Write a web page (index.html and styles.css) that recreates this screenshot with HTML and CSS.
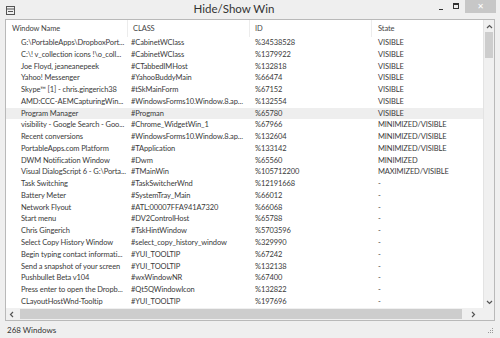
FILE: index.html
```html
<!DOCTYPE html>
<html lang="en">
<head>
    <meta charset="UTF-8">
    <title>Hide/Show Win</title>
    <link rel="stylesheet" href="styles.css">
</head>
<body>
<div class="window">
    <div class="titlebar">
        <svg class="app-icon" width="9" height="9" viewBox="0 0 9 9">
            <rect x="0.5" y="0.5" width="8" height="8" fill="none" stroke="#555"/>
            <line x1="0.5" y1="3" x2="8.5" y2="3" stroke="#555"/>
            <line x1="2" y1="5.5" x2="7" y2="5.5" stroke="#555"/>
        </svg>
        <div class="title">Hide/Show Win</div>
        <div class="caption-buttons">
            <div class="cap-btn"><span class="min-glyph"></span></div>
            <div class="cap-btn"><span class="max-glyph"></span></div>
            <div class="cap-btn close">&#x2715;</div>
        </div>
    </div>

    <div class="listbox">
        <div class="list-main">
            <div class="list-view">
                <div class="row header">
                    <div class="cell">Window Name</div>
                    <div class="cell">CLASS</div>
                    <div class="cell">ID</div>
                    <div class="cell">State</div>
                </div>
                <div class="row"><div class="cell">G:\PortableApps\DropboxPort...</div><div class="cell">#CabinetWClass</div><div class="cell">%34538528</div><div class="cell">VISIBLE</div></div>
                <div class="row"><div class="cell">C:\! v_collection icons !\o_coll...</div><div class="cell">#CabinetWClass</div><div class="cell">%1379922</div><div class="cell">VISIBLE</div></div>
                <div class="row"><div class="cell">Joe Floyd, jeaneanepeek</div><div class="cell">#CTabbedIMHost</div><div class="cell">%132818</div><div class="cell">VISIBLE</div></div>
                <div class="row"><div class="cell">Yahoo! Messenger</div><div class="cell">#YahooBuddyMain</div><div class="cell">%66474</div><div class="cell">VISIBLE</div></div>
                <div class="row"><div class="cell">Skype™ [1] - chris.gingerich38</div><div class="cell">#tSkMainForm</div><div class="cell">%67152</div><div class="cell">VISIBLE</div></div>
                <div class="row"><div class="cell">AMD:CCC-AEMCapturingWin...</div><div class="cell">#WindowsForms10.Window.8.ap...</div><div class="cell">%132554</div><div class="cell">VISIBLE</div></div>
                <div class="row selected"><div class="cell">Program Manager</div><div class="cell">#Progman</div><div class="cell">%65780</div><div class="cell">VISIBLE</div></div>
                <div class="row"><div class="cell">visibility - Google Search - Goo...</div><div class="cell">#Chrome_WidgetWin_1</div><div class="cell">%67966</div><div class="cell">MINIMIZED/VISIBLE</div></div>
                <div class="row"><div class="cell">Recent conversions</div><div class="cell">#WindowsForms10.Window.8.ap...</div><div class="cell">%132604</div><div class="cell">MINIMIZED/VISIBLE</div></div>
                <div class="row"><div class="cell">PortableApps.com Platform</div><div class="cell">#TApplication</div><div class="cell">%133142</div><div class="cell">MINIMIZED/VISIBLE</div></div>
                <div class="row"><div class="cell">DWM Notification Window</div><div class="cell">#Dwm</div><div class="cell">%65560</div><div class="cell">MINIMIZED</div></div>
                <div class="row"><div class="cell">Visual DialogScript 6 - G:\Porta...</div><div class="cell">#TMainWin</div><div class="cell">%105712200</div><div class="cell">MAXIMIZED/VISIBLE</div></div>
                <div class="row"><div class="cell">Task Switching</div><div class="cell">#TaskSwitcherWnd</div><div class="cell">%12191668</div><div class="cell">-</div></div>
                <div class="row"><div class="cell">Battery Meter</div><div class="cell">#SystemTray_Main</div><div class="cell">%66012</div><div class="cell">-</div></div>
                <div class="row"><div class="cell">Network Flyout</div><div class="cell">#ATL:00007FFA941A7320</div><div class="cell">%66068</div><div class="cell">-</div></div>
                <div class="row"><div class="cell">Start menu</div><div class="cell">#DV2ControlHost</div><div class="cell">%65788</div><div class="cell">-</div></div>
                <div class="row"><div class="cell">Chris Gingerich</div><div class="cell">#TskHintWindow</div><div class="cell">%5703596</div><div class="cell">-</div></div>
                <div class="row"><div class="cell">Select Copy History Window</div><div class="cell">#select_copy_history_window</div><div class="cell">%329990</div><div class="cell">-</div></div>
                <div class="row"><div class="cell">Begin typing contact informati...</div><div class="cell">#YUI_TOOLTIP</div><div class="cell">%67242</div><div class="cell">-</div></div>
                <div class="row"><div class="cell">Send a snapshot of your screen</div><div class="cell">#YUI_TOOLTIP</div><div class="cell">%132138</div><div class="cell">-</div></div>
                <div class="row"><div class="cell">Pushbullet Beta v104</div><div class="cell">#wxWindowNR</div><div class="cell">%67400</div><div class="cell">-</div></div>
                <div class="row"><div class="cell">Press enter to open the Dropb...</div><div class="cell">#Qt5QWindowIcon</div><div class="cell">%132822</div><div class="cell">-</div></div>
                <div class="row"><div class="cell">CLayoutHostWnd-Tooltip</div><div class="cell">#YUI_TOOLTIP</div><div class="cell">%197696</div><div class="cell">-</div></div>
            </div>
            <div class="vscroll">
                <svg class="arrow" width="7" height="5" viewBox="0 0 7 5"><polyline points="1,4 3.5,1.5 6,4" fill="none" stroke="#555" stroke-width="1.2"/></svg>
                <div class="vthumb"></div>
                <div class="spacer"></div>
                <svg class="arrow" width="7" height="5" viewBox="0 0 7 5"><polyline points="1,1 3.5,3.5 6,1" fill="none" stroke="#555" stroke-width="1.2"/></svg>
            </div>
        </div>
        <div class="hscroll-row">
            <div class="hscroll">
                <svg class="arrow" width="5" height="7" viewBox="0 0 5 7"><polyline points="4,1 1.5,3.5 4,6" fill="none" stroke="#555" stroke-width="1.2"/></svg>
                <div class="hthumb"></div>
                <div class="spacer"></div>
                <svg class="arrow" width="5" height="7" viewBox="0 0 5 7"><polyline points="1,1 3.5,3.5 1,6" fill="none" stroke="#555" stroke-width="1.2"/></svg>
            </div>
            <div class="corner"></div>
        </div>
    </div>

    <div class="statusbar">
        <span>268 Windows</span>
        <svg class="grip" width="6" height="6" viewBox="0 0 6 6">
            <rect x="4" y="0" width="1" height="1" fill="#999"/>
            <rect x="2" y="2" width="1" height="1" fill="#999"/>
            <rect x="4" y="2" width="1" height="1" fill="#999"/>
            <rect x="0" y="4" width="1" height="1" fill="#999"/>
            <rect x="2" y="4" width="1" height="1" fill="#999"/>
            <rect x="4" y="4" width="1" height="1" fill="#999"/>
        </svg>
    </div>
</div>
</body>
</html>
```

FILE: styles.css
```css
body {
    margin: 0;
    font-family: Lato, "Noto Sans", sans-serif;
    background-color: #efefef;
}
.window {
    width: 500px;
    height: 338px;
    background-color: #efefef;
    display: flex;
    flex-direction: column;
    overflow: hidden;
}
.titlebar {
    height: 19px;
    display: flex;
    align-items: flex-start;
}
.app-icon {
    margin: 6px 0 0 6px;
}
.title {
    flex: 1;
    text-align: center;
    font-size: 11.5px;
    line-height: 18px;
    color: #333;
    padding-left: 20px;
}
.caption-buttons {
    display: flex;
}
.cap-btn {
    width: 15px;
    height: 13px;
    display: flex;
    align-items: center;
    justify-content: center;
}
.min-glyph {
    width: 4px;
    height: 1px;
    background-color: #333;
    margin-top: 6px;
}
.max-glyph {
    width: 4px;
    height: 3px;
    border: 1px solid #333;
    border-top-width: 2px;
    margin-top: -2px;
}
.close {
    width: 31px;
    margin-left: 2px;
    margin-right: 4px;
    background-color: #c7c7c7;
    color: #fff;
    font-family: "DejaVu Sans", sans-serif;
    font-size: 8px;
}
.listbox {
    margin: 0 5px;
    height: 300px;
    border: 1px solid #b9b9b9;
    background-color: #fff;
    display: flex;
    flex-direction: column;
}
.list-main {
    flex: 1;
    display: flex;
    min-height: 0;
}
.list-view {
    flex: 1;
    overflow: hidden;
}
.row {
    display: grid;
    grid-template-columns: 122px 122px 122px 1fr;
    height: 11.77px;
    font-size: 7.5px;
    letter-spacing: -0.1px;
    line-height: 11.77px;
    color: #3a3a3a;
}
.row .cell {
    white-space: nowrap;
    overflow: hidden;
}
.row .cell:nth-child(1) { padding-left: 15px; }
.row .cell:nth-child(2) { padding-left: 3px; }
.row .cell:nth-child(3) { padding-left: 5px; }
.row .cell:nth-child(4) { padding-left: 6px; }
.row.selected {
    background-color: #eeeeee;
}
.row.header {
    height: 17px;
    line-height: 17px;
    color: #444;
}
.row.header .cell {
    border-right: 1px solid #ececec;
}
.row.header .cell:nth-child(1) { padding-left: 6px; }
.row.header .cell:nth-child(2) { padding-left: 5px; }
.row.header .cell:nth-child(4) { border-right: none; }
.vscroll {
    width: 10px;
    border-left: 1px solid #e3e3e3;
    background-color: #f0f0f0;
    display: flex;
    flex-direction: column;
    align-items: center;
    padding: 4px 0 3px;
}
.vthumb {
    width: 8px;
    height: 26px;
    margin-top: 3px;
    background-color: #cdcdcd;
}
.spacer {
    flex: 1;
}
.hscroll-row {
    height: 12px;
    display: flex;
}
.hscroll {
    flex: 1;
    display: flex;
    align-items: center;
    background-color: #f0f0f0;
    padding: 0 7px 0 3px;
}
.hthumb {
    width: 442px;
    height: 10px;
    margin-left: 6px;
    background-color: #cdcdcd;
}
.corner {
    width: 11px;
    background-color: #f0f0f0;
}
.statusbar {
    flex: 1;
    display: flex;
    align-items: center;
    justify-content: space-between;
    padding: 0 6px 0 7px;
    font-size: 8px;
    color: #333;
}
.grip {
    align-self: flex-end;
    margin-bottom: 4px;
}
```
